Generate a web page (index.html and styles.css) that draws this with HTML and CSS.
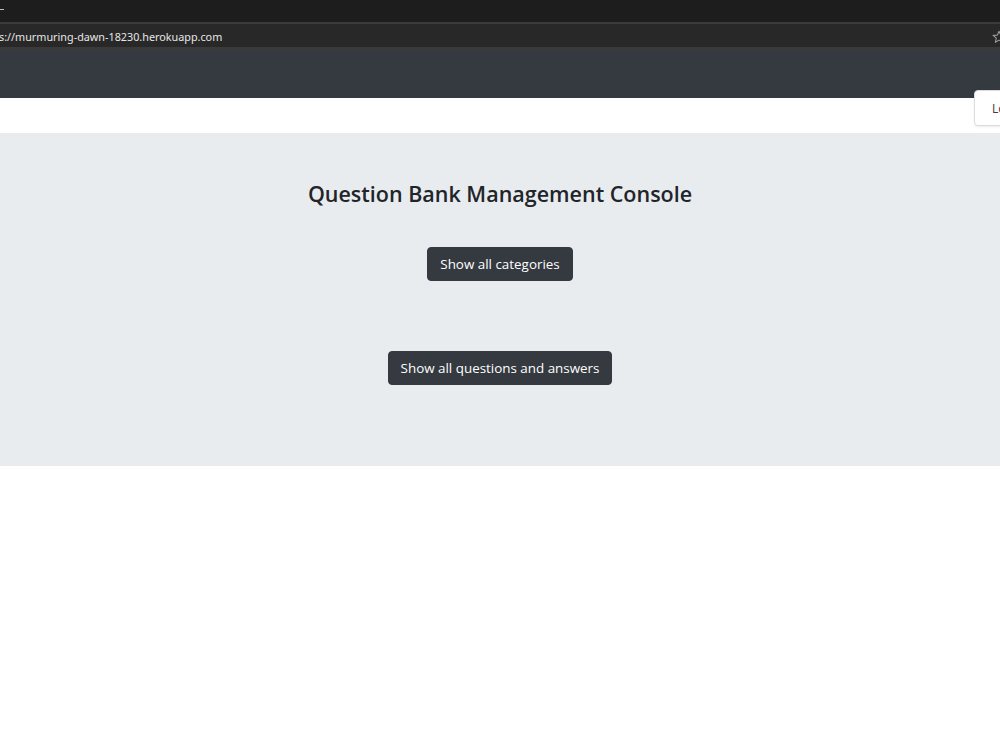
FILE: index.html
```html
<!DOCTYPE html>
<html>
<head>
<meta charset="utf-8">
<link rel="stylesheet" href="styles.css">
</head>
<body>
<div class="tabs"><span class="tab-mark"></span></div>
<div class="addr">
  <span class="url">s://murmuring-dawn-18230.herokuapp.com</span>
  <svg class="star" width="14" height="14" viewBox="0 0 14 14"><path d="M7 1.2 L8.7 5.1 L12.9 5.4 L9.7 8.2 L10.7 12.3 L7 10.1 L3.3 12.3 L4.3 8.2 L1.1 5.4 L5.3 5.1 Z" fill="none" stroke="#9a9a9a" stroke-width="1.1" stroke-linejoin="round"/></svg>
</div>
<nav class="navbar"></nav>
<div class="subbar">
  <button class="login">Login</button>
</div>
<section class="jumbo">
  <h1 class="title">Question Bank Management Console</h1>
  <div class="actions">
    <button class="btn-dark">Show all categories</button>
    <button class="btn-dark">Show all questions and answers</button>
  </div>
</section>
</body>
</html>
```
FILE: styles.css
```css
html, body {
  margin: 0;
  padding: 0;
  background: #ffffff;
  overflow: hidden;
}
body {
  width: 1000px;
  height: 750px;
  font-family: "Open Sans", "Noto Sans", sans-serif;
}
.tabs {
  height: 22px;
  background: #1d1d1d;
  border-bottom: 2px solid #3b3b3b;
  position: relative;
}
.tab-mark {
  position: absolute;
  left: 0;
  top: 9px;
  width: 4px;
  height: 1px;
  background: #bdbdbd;
}
.addr {
  height: 23px;
  background: #282828;
  border-bottom: 3px solid #3a3a3a;
  display: flex;
  align-items: center;
  justify-content: space-between;
}
.url {
  font-family: "Noto Sans", sans-serif;
  font-size: 10.8px;
  color: #e6e6e6;
  margin-left: -1px;
  margin-top: 2px;
}
.star {
  margin-right: -6px;
  margin-top: 2px;
}
.navbar {
  height: 48px;
  background: #343a40;
}
.subbar {
  height: 35px;
  position: relative;
}
.login {
  position: absolute;
  left: 974px;
  top: -8px;
  width: 60px;
  height: 36px;
  background: #ffffff;
  border: 1px solid #dcdcdc;
  border-radius: 4px;
  font-family: "Open Sans", sans-serif;
  font-size: 12px;
  color: #3d3d3d;
  text-align: left;
  padding: 0 0 0 17px;
  box-shadow: 0 1px 2px rgba(0,0,0,0.08);
}
.jumbo {
  height: 333px;
  background: #e9ecef;
  display: flex;
  flex-direction: column;
  align-items: center;
}
.title {
  margin: 45px 0 0;
  font-weight: 600;
  font-size: 21.5px;
  line-height: 32px;
  color: #212529;
}
.actions {
  margin-top: 37px;
  display: flex;
  flex-direction: column;
  align-items: center;
  gap: 70px;
}
.btn-dark {
  height: 34px;
  padding: 0 12px;
  background: #343a40;
  border: 1px solid #343a40;
  border-radius: 4px;
  color: #ffffff;
  font-family: "Open Sans", sans-serif;
  font-size: 13.4px;
  line-height: 32px;
}
```
